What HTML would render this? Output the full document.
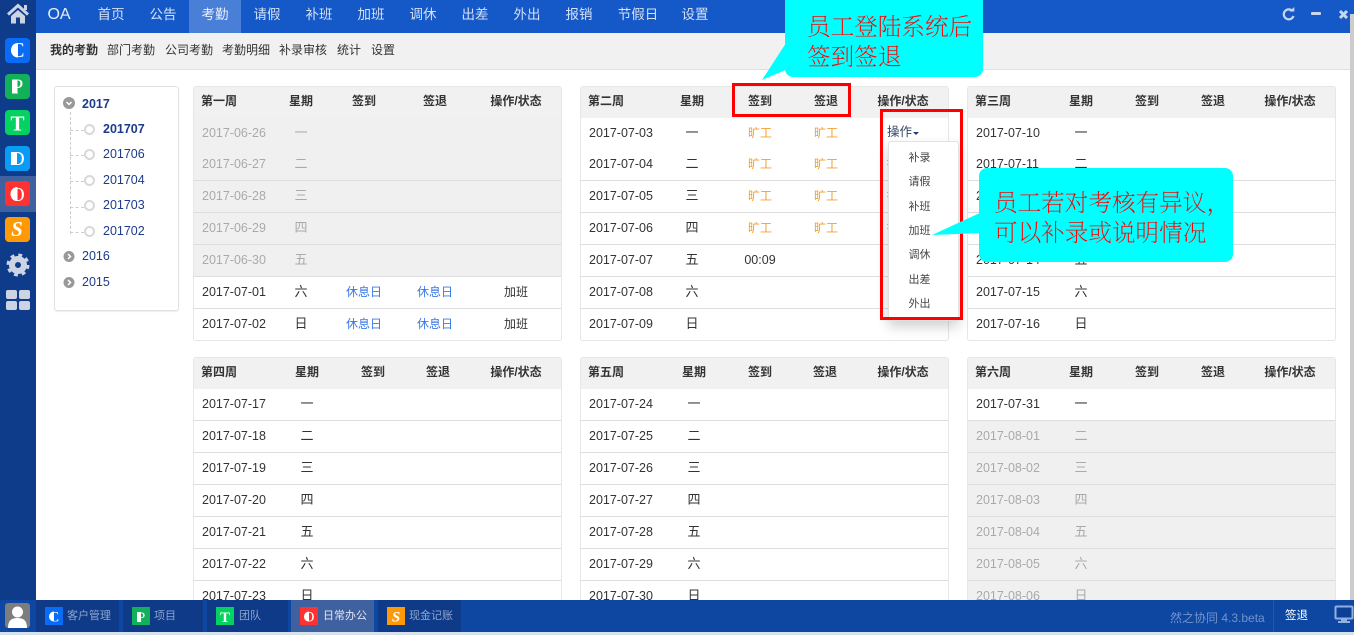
<!DOCTYPE html>
<html lang="zh"><head><meta charset="utf-8"><title>考勤</title>
<style>
*{box-sizing:border-box}
html,body{margin:0;padding:0;width:1354px;height:635px;overflow:hidden;background:#fff;font-family:"Liberation Sans","Noto Sans CJK SC",sans-serif;font-size:12px;color:#333}
.abs,.top a,.sub a,.panel,.r,.r span,.h span,.tree div,.tree i,.task,.task b,.task span,.dd span{position:absolute;display:block}
.top{position:absolute;left:36px;top:0;width:1318px;height:33px;background:#1558c8}
.side{position:absolute;left:0;top:0;width:36px;height:600px;background:#0f3b8b}
.tab{position:absolute;top:0;height:33px;width:52px;line-height:29px;text-align:center;font-size:13.500px;color:#d5e0f5}
.sub{position:absolute;left:36px;top:33px;width:1318px;height:37px;background:#f1f1f1;border-bottom:1px solid #e0e0e0}
.sub a{top:9px;line-height:17px;color:#333;font-size:12px;white-space:nowrap}
.treebox{position:absolute;left:54px;top:86px;width:125px;height:225px;border:1px solid #e2e2e2;border-radius:3px;box-shadow:0 1px 1px #eee}
.panel{width:369px;height:255px;border:1px solid #e6e6e6;border-radius:3px;background:#fff;overflow:hidden;--w:113px;--a:179px;--b:245px;--o:322px}
.h{position:absolute;left:0;top:0;width:100%;height:31px;background:#f1f1f1;font-weight:bold;color:#333;line-height:29px}
.h span,.r span{top:0;width:80px;text-align:center;white-space:nowrap}
.h .d{left:7px;width:auto;text-align:left}
.r{left:0;width:100%;height:32px;line-height:30px;border-bottom:1px solid #ddd}
.r.n{border-bottom:none}
.r .d{left:8px;width:80px;text-align:left;font-size:12.5px;color:#333}
.w{left:calc(var(--w) - 40px)}.a{left:calc(var(--a) - 40px)}.b{left:calc(var(--b) - 40px)}.o{left:calc(var(--o) - 40px)}
.r .w{font-size:13px}
.g{background:#f0f0f0}.g span,.g .d{color:#aaa}
.x{color:#f0a030}.h1{color:#3b78e7}
.tree{position:absolute;left:0;top:0}
.tree div{color:#1d3b8b;font-size:12.5px;line-height:16px}
.ring{width:11px;height:11px;border:2px solid #d8d8d8;border-radius:50%;background:#fff}
.dash{border-left:1px dashed #ccc}
.dh{border-top:1px dashed #ccc;height:0;width:14px}
.bot{position:absolute;left:0;top:600px;width:1354px;height:32px;background:#0d47a1}
.task{top:0;height:32px;background:#0e3a88}
.task span{top:0;line-height:32px;font-size:11px;color:#8fa5cf;white-space:nowrap}
.dd{position:absolute;left:888px;top:141px;width:71px;height:180px;background:#fff;border:1px solid #e2e2e2;border-radius:3px;box-shadow:0 6px 12px rgba(0,0,0,.18)}
.dd span{left:0;width:61px;text-align:center;line-height:16px;font-size:11px;color:#444}
.red{position:absolute;border:3px solid #f00}
.note{position:absolute;font-family:"Noto Serif CJK SC","Liberation Serif",serif;font-size:23.6px;font-weight:200;color:#f00;line-height:30px;white-space:nowrap}
.cy{position:absolute;background:#0ff;border-radius:8px}
</style></head><body>

<div class="top">
<div class="tab" style="left:-1px;width:48px;font-size:16px;color:#e8eefa">OA</div>
<div class="tab" style="left:49px">首页</div>
<div class="tab" style="left:101px">公告</div>
<div class="tab" style="left:153px;background:#4a7fd8;color:#e8eefa">考勤</div>
<div class="tab" style="left:205px">请假</div>
<div class="tab" style="left:257px">补班</div>
<div class="tab" style="left:309px">加班</div>
<div class="tab" style="left:361px">调休</div>
<div class="tab" style="left:413px">出差</div>
<div class="tab" style="left:465px">外出</div>
<div class="tab" style="left:517px">报销</div>
<div class="tab" style="left:572px;width:60px">节假日</div>
<div class="tab" style="left:633px">设置</div>
</div>
<svg style="position:absolute;left:1280px;top:6px" width="74" height="16" viewBox="0 0 74 16">
<path d="M12.500 5A5 5 0 1 0 13.500 10" fill="none" stroke="#c9d6ee" stroke-width="2.200"/><path d="M9.500 5.500h4.800V1z" fill="#c9d6ee"/>
<rect x="31" y="6" width="10" height="3" rx="1" fill="#c9d6ee"/>
<path d="M60 5l7 7M67 5l-7 7" stroke="#c9d6ee" stroke-width="3"/>
</svg>

<div class="sub">
<a style="left:14px;font-weight:bold">我的考勤</a>
<a style="left:71px">部门考勤</a>
<a style="left:129px">公司考勤</a>
<a style="left:186px">考勤明细</a>
<a style="left:243px">补录审核</a>
<a style="left:301px">统计</a>
<a style="left:335px">设置</a>
</div>

<!-- tree -->
<div class="treebox"></div>
<div class="tree">
<i class="dash" style="left:70px;top:112px;height:122px"></i>
<i class="dh" style="left:70px;top:130px"></i><i class="dh" style="left:70px;top:155px"></i><i class="dh" style="left:70px;top:181px"></i><i class="dh" style="left:70px;top:207px"></i><i class="dh" style="left:70px;top:232px"></i>
<i class="ring" style="left:84px;top:124px"></i><i class="ring" style="left:84px;top:149px"></i><i class="ring" style="left:84px;top:175px"></i><i class="ring" style="left:84px;top:200px"></i><i class="ring" style="left:84px;top:226px"></i>
<svg style="position:absolute;left:63px;top:97px" width="12" height="192" viewBox="0 0 12 192">
<circle cx="6" cy="6" r="6" fill="#999"/><path d="M3.500 5l2.500 2.500L8.500 5" fill="none" stroke="#fff" stroke-width="1.500"/>
<circle cx="6" cy="159.500" r="5.500" fill="#999"/><path d="M5 157l2.500 2.500L5 162" fill="none" stroke="#fff" stroke-width="1.500"/>
<circle cx="6" cy="185.500" r="5.500" fill="#999"/><path d="M5 183l2.500 2.500L5 188" fill="none" stroke="#fff" stroke-width="1.500"/>
</svg>
<div style="left:82px;top:96px;font-weight:bold">2017</div>
<div style="left:103px;top:121px;font-weight:bold">201707</div>
<div style="left:103px;top:146px">201706</div>
<div style="left:103px;top:172px">201704</div>
<div style="left:103px;top:197px">201703</div>
<div style="left:103px;top:223px">201702</div>
<div style="left:82px;top:248px">2016</div>
<div style="left:82px;top:274px">2015</div>
</div>

<!-- P1 -->
<div class="panel" style="left:193px;top:86px;--w:107px;--a:170px;--b:241px">
<div class="h"><span class="d">第一周</span><span class="w">星期</span><span class="a">签到</span><span class="b">签退</span><span class="o">操作/状态</span></div>
<div class="r g n" style="top:31px"><span class="d">2017-06-26</span><span class="w">一</span></div>
<div class="r g" style="top:62px;height:32px"><span class="d">2017-06-27</span><span class="w">二</span></div>
<div class="r g" style="top:94px"><span class="d">2017-06-28</span><span class="w">三</span></div>
<div class="r g" style="top:126px"><span class="d">2017-06-29</span><span class="w">四</span></div>
<div class="r g" style="top:158px"><span class="d">2017-06-30</span><span class="w">五</span></div>
<div class="r" style="top:190px"><span class="d">2017-07-01</span><span class="w">六</span><span class="a h1">休息日</span><span class="b h1">休息日</span><span class="o">加班</span></div>
<div class="r n" style="top:222px"><span class="d">2017-07-02</span><span class="w">日</span><span class="a h1">休息日</span><span class="b h1">休息日</span><span class="o">加班</span></div>
</div>

<!-- P2 -->
<div class="panel" style="left:580px;top:86px;--w:111px">
<div class="h"><span class="d">第二周</span><span class="w">星期</span><span class="a">签到</span><span class="b">签退</span><span class="o">操作/状态</span></div>
<div class="r n" style="top:31px"><span class="d">2017-07-03</span><span class="w">一</span><span class="a x">旷工</span><span class="b x">旷工</span></div>
<div class="r" style="top:62px"><span class="d">2017-07-04</span><span class="w">二</span><span class="a x">旷工</span><span class="b x">旷工</span><span style="left:306px;width:auto;color:#555">操作</span></div>
<div class="r" style="top:94px"><span class="d">2017-07-05</span><span class="w">三</span><span class="a x">旷工</span><span class="b x">旷工</span><span style="left:306px;width:auto;color:#555">操作</span></div>
<div class="r" style="top:126px"><span class="d">2017-07-06</span><span class="w">四</span><span class="a x">旷工</span><span class="b x">旷工</span><span style="left:306px;width:auto;color:#555">操作</span></div>
<div class="r" style="top:158px"><span class="d">2017-07-07</span><span class="w">五</span><span class="a" style="font-size:12.500px">00:09</span></div>
<div class="r" style="top:190px"><span class="d">2017-07-08</span><span class="w">六</span></div>
<div class="r n" style="top:222px"><span class="d">2017-07-09</span><span class="w">日</span></div>
</div>
<div style="position:absolute;left:887px;top:124px;line-height:17px;font-size:12.500px;color:#334466">操作</div>
<div style="position:absolute;left:913px;top:132px;width:0;height:0;border:3px solid transparent;border-top-color:#1d3b8b"></div>

<!-- P3 -->
<div class="panel" style="left:967px;top:86px">
<div class="h"><span class="d">第三周</span><span class="w">星期</span><span class="a">签到</span><span class="b">签退</span><span class="o">操作/状态</span></div>
<div class="r n" style="top:31px"><span class="d">2017-07-10</span><span class="w">一</span></div>
<div class="r" style="top:62px"><span class="d">2017-07-11</span><span class="w">二</span></div>
<div class="r" style="top:94px"><span class="d">2017-07-12</span><span class="w">三</span></div>
<div class="r" style="top:126px"><span class="d">2017-07-13</span><span class="w">四</span></div>
<div class="r" style="top:158px"><span class="d">2017-07-14</span><span class="w">五</span></div>
<div class="r" style="top:190px"><span class="d">2017-07-15</span><span class="w">六</span></div>
<div class="r n" style="top:222px"><span class="d">2017-07-16</span><span class="w">日</span></div>
</div>

<!-- P4 -->
<div class="panel" style="left:193px;top:357px;--b:244px">
<div class="h"><span class="d">第四周</span><span class="w">星期</span><span class="a">签到</span><span class="b">签退</span><span class="o">操作/状态</span></div>
<div class="r" style="top:31px"><span class="d">2017-07-17</span><span class="w">一</span></div>
<div class="r" style="top:63px"><span class="d">2017-07-18</span><span class="w">二</span></div>
<div class="r" style="top:95px"><span class="d">2017-07-19</span><span class="w">三</span></div>
<div class="r" style="top:127px"><span class="d">2017-07-20</span><span class="w">四</span></div>
<div class="r" style="top:159px"><span class="d">2017-07-21</span><span class="w">五</span></div>
<div class="r" style="top:191px"><span class="d">2017-07-22</span><span class="w">六</span></div>
<div class="r n" style="top:223px"><span class="d">2017-07-23</span><span class="w">日</span></div>
</div>

<!-- P5 -->
<div class="panel" style="left:580px;top:357px;--b:244px">
<div class="h"><span class="d">第五周</span><span class="w">星期</span><span class="a">签到</span><span class="b">签退</span><span class="o">操作/状态</span></div>
<div class="r" style="top:31px"><span class="d">2017-07-24</span><span class="w">一</span></div>
<div class="r" style="top:63px"><span class="d">2017-07-25</span><span class="w">二</span></div>
<div class="r" style="top:95px"><span class="d">2017-07-26</span><span class="w">三</span></div>
<div class="r" style="top:127px"><span class="d">2017-07-27</span><span class="w">四</span></div>
<div class="r" style="top:159px"><span class="d">2017-07-28</span><span class="w">五</span></div>
<div class="r" style="top:191px"><span class="d">2017-07-29</span><span class="w">六</span></div>
<div class="r n" style="top:223px"><span class="d">2017-07-30</span><span class="w">日</span></div>
</div>

<!-- P6 -->
<div class="panel" style="left:967px;top:357px">
<div class="h"><span class="d">第六周</span><span class="w">星期</span><span class="a">签到</span><span class="b">签退</span><span class="o">操作/状态</span></div>
<div class="r" style="top:31px"><span class="d">2017-07-31</span><span class="w">一</span></div>
<div class="r g" style="top:63px"><span class="d">2017-08-01</span><span class="w">二</span></div>
<div class="r g" style="top:95px"><span class="d">2017-08-02</span><span class="w">三</span></div>
<div class="r g" style="top:127px"><span class="d">2017-08-03</span><span class="w">四</span></div>
<div class="r g" style="top:159px"><span class="d">2017-08-04</span><span class="w">五</span></div>
<div class="r g" style="top:191px"><span class="d">2017-08-05</span><span class="w">六</span></div>
<div class="r g n" style="top:223px"><span class="d">2017-08-06</span><span class="w">日</span></div>
</div>

<!-- dropdown -->
<div class="dd">
<span style="top:8px">补录</span><span style="top:32px">请假</span><span style="top:57px">补班</span><span style="top:81px">加班</span><span style="top:105px">调休</span><span style="top:130px">出差</span><span style="top:154px">外出</span>
</div>

<!-- scrollbar -->
<div style="position:absolute;left:1350px;top:14px;width:4px;height:586px;background:#ccc"></div>

<!-- sidebar -->
<div class="side">
<div style="position:absolute;left:0;top:176px;width:36px;height:36px;background:#3f619f"></div>
<svg style="position:absolute;left:0;top:0" width="36" height="600" viewBox="0 0 36 600" font-family="Liberation Serif">
<path d="M8 14.500L18 5.500l10 9" fill="none" stroke="#ccd4e4" stroke-width="3"/>
<path d="M11 16L18 10l7 6v7.500h-5V17.500h-4v6h-5z" fill="#ccd4e4"/>
<rect x="24" y="5" width="3" height="5" fill="#ccd4e4"/>
<rect x="5" y="38" width="25" height="25" rx="4" fill="#0a6cf5"/>
<rect x="5" y="74" width="25" height="25" rx="4" fill="#13b05a"/>
<rect x="5" y="110" width="25" height="25" rx="4" fill="#04d260"/>
<rect x="5" y="146" width="25" height="25" rx="4" fill="#0a9cf5"/>
<rect x="5" y="181" width="25" height="25" rx="4" fill="#ff3232"/>
<rect x="5" y="217" width="25" height="25" rx="4" fill="#ff9a06"/>
<path d="M18 43.500a7 7 0 0 0 0 14z" fill="#fff"/>
<text x="17.500" y="57" text-anchor="middle" font-size="21" fill="#fff">C</text>
<rect x="12" y="80" width="5.500" height="13.500" fill="#fff"/>
<text x="17.500" y="93.500" text-anchor="middle" font-size="21" fill="#fff">P</text>
<text x="17.500" y="130.500" text-anchor="middle" font-weight="bold" font-size="21" fill="#fff">T</text>
<rect x="11" y="152" width="6" height="13" fill="#fff"/>
<text x="17.500" y="165" text-anchor="middle" font-size="20" fill="#fff">D</text>
<path d="M17.500 187a7 7 0 0 0 0 14z" fill="#fff"/>
<text x="17.500" y="200.800" text-anchor="middle" font-size="20" fill="#fff">O</text>
<text x="17" y="236" text-anchor="middle" font-weight="bold" font-style="italic" font-size="21" fill="#fff">S</text>
<circle cx="18" cy="265" r="6" fill="none" stroke="#ccd4e4" stroke-width="6"/>
<circle cx="18" cy="265" r="10" fill="none" stroke="#ccd4e4" stroke-width="3" stroke-dasharray="3.900 3.950"/>
<rect x="6" y="290" width="11" height="9" rx="2" fill="#ccd4e4"/><rect x="19" y="290" width="11" height="9" rx="2" fill="#ccd4e4"/>
<rect x="6" y="301" width="11" height="9" rx="2" fill="#ccd4e4"/><rect x="19" y="301" width="11" height="9" rx="2" fill="#ccd4e4"/>
</svg>
</div>

<!-- bottom -->
<div style="position:absolute;left:0;top:632px;width:1354px;height:3px;background:#d5e2ee"></div>
<div class="bot">
<div class="task" style="left:36px;width:83px"></div>
<div class="task" style="left:123px;width:80px"></div>
<div class="task" style="left:207px;width:81px"></div>
<div class="task" style="left:291px;width:83px;background:#3f619f"></div>
<div class="task" style="left:378px;width:83px"></div>
<svg style="position:absolute;left:0;top:0" width="420" height="32" viewBox="0 0 420 32" font-family="Liberation Serif">
<rect x="5" y="3" width="25" height="25" rx="3" fill="#7d7d7d"/>
<circle cx="17.500" cy="12" r="5.500" fill="#fff"/><path d="M8 28c0-8 4-10 9.500-10S27 20 27 28z" fill="#fff"/>
<rect x="45" y="7" width="18" height="18" fill="#0a6cf5"/><rect x="132" y="7" width="18" height="18" fill="#13b05a"/><rect x="216" y="7" width="18" height="18" fill="#04d260"/><rect x="300" y="7" width="18" height="18" fill="#ff3232"/><rect x="387" y="7" width="18" height="18" fill="#ff9a06"/>
<path d="M54 11.500a5 5 0 0 0 0 10z" fill="#fff"/>
<text x="54" y="21.500" text-anchor="middle" font-size="15" fill="#fff">C</text>
<rect x="137" y="12" width="4" height="10" fill="#fff"/>
<text x="141" y="22" text-anchor="middle" font-size="15" fill="#fff">P</text>
<text x="225" y="22" text-anchor="middle" font-weight="bold" font-size="15" fill="#fff">T</text>
<path d="M309 11.500a5 5 0 0 0 0 10z" fill="#fff"/>
<text x="309" y="21.500" text-anchor="middle" font-size="15" fill="#fff">O</text>
<text x="396" y="21.500" text-anchor="middle" font-weight="bold" font-style="italic" font-size="15" fill="#fff">S</text>
</svg>
<div class="task" style="left:67px;background:none"><span>客户管理</span></div>
<div class="task" style="left:154px;background:none"><span>项目</span></div>
<div class="task" style="left:239px;background:none"><span>团队</span></div>
<div class="task" style="left:323px;background:none"><span style="color:#dfe6f3">日常办公</span></div>
<div class="task" style="left:409px;background:none"><span>现金记账</span></div>
<div style="position:absolute;left:1170px;top:0;line-height:36px;color:#7393cc;white-space:nowrap">然之协同 4.3.beta</div>
<div style="position:absolute;left:1273px;top:0;width:1px;height:32px;background:#1e5ab4"></div>
<div style="position:absolute;left:1285px;top:0;line-height:32px;color:#fff;font-size:11.500px">签退</div>
<svg style="position:absolute;left:1334px;top:5px" width="20" height="20" viewBox="0 0 20 20"><rect x="1.500" y="1.500" width="17" height="12" rx="1" fill="#0d3f94" stroke="#8fb0e0" stroke-width="2"/><rect x="7" y="14" width="6" height="2" fill="#8fb0e0"/><rect x="4" y="16" width="12" height="2" fill="#8fb0e0"/></svg>
</div>

<!-- annotations -->
<div class="red" style="left:732px;top:83px;width:119px;height:34px"></div>
<div class="red" style="left:880px;top:109px;width:83px;height:211px"></div>

<svg style="position:absolute;left:0;top:0;pointer-events:none" width="1354" height="300" viewBox="0 0 1354 300">
<polygon points="788,40 762,80 790,68" fill="#0ff"/>
<polygon points="982,212 932,235 982,233" fill="#0ff"/>
</svg>
<div class="cy" style="left:785px;top:-8px;width:198px;height:85px"></div>
<div class="cy" style="left:979px;top:168px;width:254px;height:94px"></div>
<div class="note" style="left:807px;top:10px">员工登陆系统后</div>
<div class="note" style="left:807px;top:40px">签到签退</div>
<div class="note" style="left:994px;top:186px">员工若对考核有异议，</div>
<div class="note" style="left:994px;top:216px">可以补录或说明情况</div>

</body></html>
